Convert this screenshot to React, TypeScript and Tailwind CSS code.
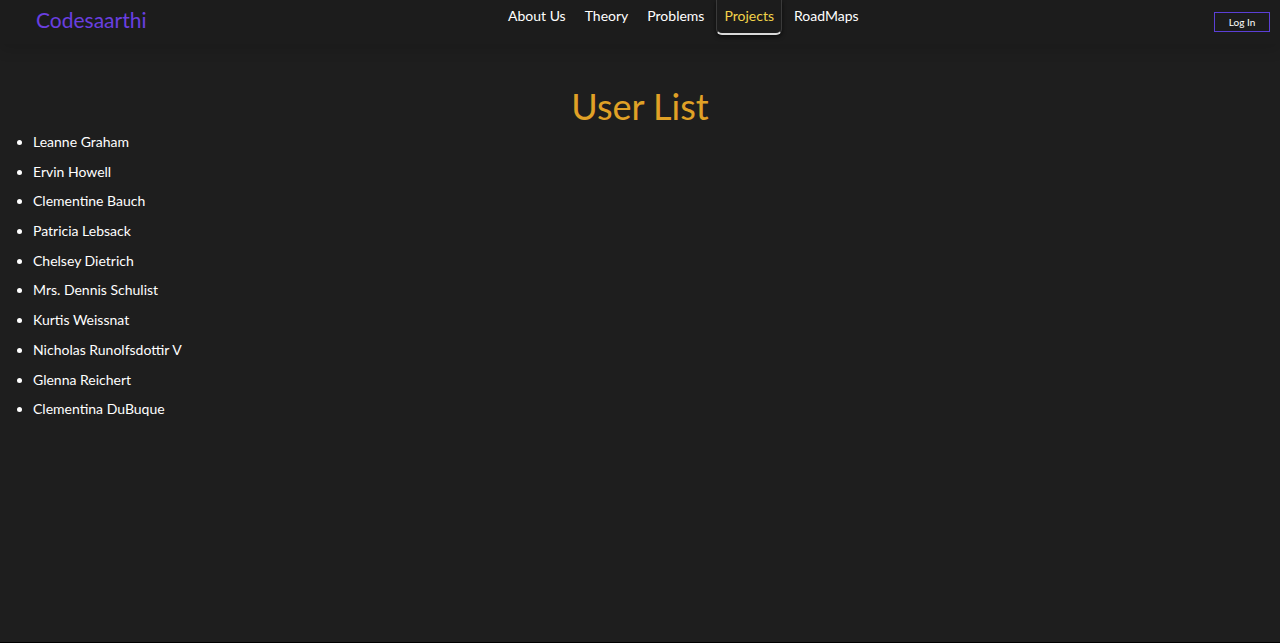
import React from "react";

const users = [
  "Leanne Graham",
  "Ervin Howell",
  "Clementine Bauch",
  "Patricia Lebsack",
  "Chelsey Dietrich",
  "Mrs. Dennis Schulist",
  "Kurtis Weissnat",
  "Nicholas Runolfsdottir V",
  "Glenna Reichert",
  "Clementina DuBuque",
];

const links = ["About Us", "Theory", "Problems", "Projects", "RoadMaps"];

export default function App() {
  return (
    <div
      className="min-h-[643px] bg-[#1e1e1e] border-b border-black text-white"
      style={{ fontFamily: "Lato, 'Noto Sans', sans-serif" }}
    >
      {/* Navbar */}
      <header className="h-[44px] flex items-start bg-[#1c1c1c] shadow-[0_6px_14px_rgba(0,0,0,0.12)]">
        <div className="w-[501px] pl-[36px] pt-[7px] text-[21px] leading-[26px] text-[#6a3fe0]">
          Codesaarthi
        </div>
        <nav className="flex items-start gap-[5px]">
          {links.map((l) =>
            l === "Projects" ? (
              <span
                key={l}
                className="px-[7px] pt-[6px] pb-[7px] text-[14px] leading-[20px] text-[#f2d34a] rounded-b-[6px] border-b-2 border-x border-b-[#d8d8d8] border-x-[#3a3a3a] shadow-[0_2px_4px_rgba(0,0,0,0.6)]"
              >
                {l}
              </span>
            ) : (
              <span
                key={l}
                className="px-[7px] pt-[6px] text-[14px] leading-[20px] text-white"
              >
                {l}
              </span>
            )
          )}
        </nav>
        <div className="ml-auto pr-[10px] pt-[12px]">
          <button className="block h-[20px] w-[56px] border border-[#5b3fd6] text-[10px] leading-[18px] text-white">
            Log In
          </button>
        </div>
      </header>

      {/* Content */}
      <main>
        <h1 className="mt-[40px] text-center text-[36px] leading-[44px] text-[#e0a126]">
          User List
        </h1>
        <ul className="mt-[4px] pl-[33px] list-disc marker:text-white">
          {users.map((u) => (
            <li key={u} className="text-[14px] leading-[20px] mb-[9.7px]">
              {u}
            </li>
          ))}
        </ul>
      </main>
    </div>
  );
}
